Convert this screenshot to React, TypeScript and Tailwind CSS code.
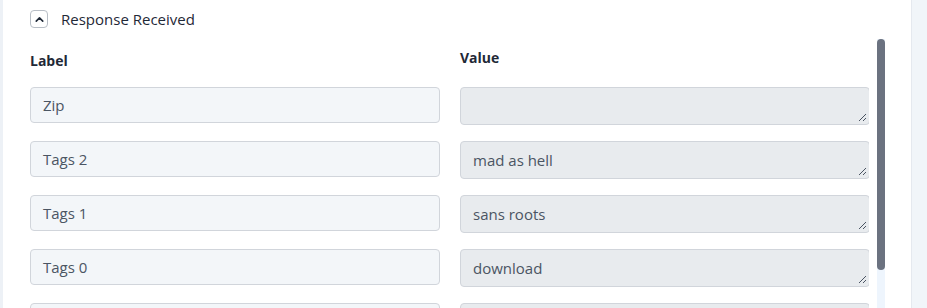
import { ChevronUp } from "lucide-react";

const rows = [
  { label: "Zip", value: "" },
  { label: "Tags 2", value: "mad as hell" },
  { label: "Tags 1", value: "sans roots" },
  { label: "Tags 0", value: "download" },
  { label: "Tags", value: "" },
];

function ResizeGrip() {
  return (
    <svg
      className="absolute bottom-[2px] right-[2px]"
      width="9"
      height="9"
      viewBox="0 0 9 9"
    >
      <path d="M8 1L1 8M8 5L5 8" stroke="#4b5563" strokeWidth="1" />
    </svg>
  );
}

export default function App() {
  return (
    <div
      className="flex h-[308px] w-[927px] overflow-hidden bg-[#f1f5f9]"
      style={{ fontFamily: '"Open Sans", "Noto Sans", sans-serif' }}
    >
      <div className="w-[3px] shrink-0 bg-[#edf1f6]" />
      <div className="flex w-[909px] shrink-0 flex-col border-r border-[#e5e9ef] bg-white">
        <div className="flex h-[38px] shrink-0 items-center pl-[27px]">
          <button className="flex h-[18px] w-[18px] items-center justify-center rounded-[4px] border border-[#b8bec6] bg-white text-[#1f2937]">
            <ChevronUp size={13} strokeWidth={3} />
          </button>
          <span className="ml-[13px] text-[15px] text-[#1f2937]">
            Response Received
          </span>
        </div>
        <div className="flex min-h-0 flex-1 pl-[27px]">
          <div className="flex-1 overflow-hidden">
            <div className="flex h-[35px] w-[840px] gap-[20px]">
              <div className="w-[410px] pt-[12px] text-[14px] font-bold text-[#1f2937]">
                Label
              </div>
              <div className="w-[410px] pt-[9px] text-[14px] font-bold text-[#1f2937]">
                Value
              </div>
            </div>
            <div className="mt-[14px] flex w-[840px] flex-col gap-[16px]">
              {rows.map((r) => (
                <div key={r.label} className="flex gap-[20px]">
                  <div className="flex h-[36px] w-[410px] items-center rounded-[4px] border border-[#d1d5db] bg-[#f3f6f9] px-[12px] text-[15px] text-[#4b5563]">
                    {r.label}
                  </div>
                  <div className="relative flex h-[38px] w-[410px] items-center rounded-[4px] border border-[#d1d5db] bg-[#e8ebee] px-[12px] text-[15px] text-[#4b5563]">
                    {r.value}
                    <ResizeGrip />
                  </div>
                </div>
              ))}
            </div>
          </div>
          <div className="ml-[8px] mr-[26px] mt-[1px] w-[8px] shrink-0 bg-[#eef5fd]">
            <div className="h-[231px] rounded-full bg-[#6b7280]" />
          </div>
        </div>
      </div>
    </div>
  );
}
